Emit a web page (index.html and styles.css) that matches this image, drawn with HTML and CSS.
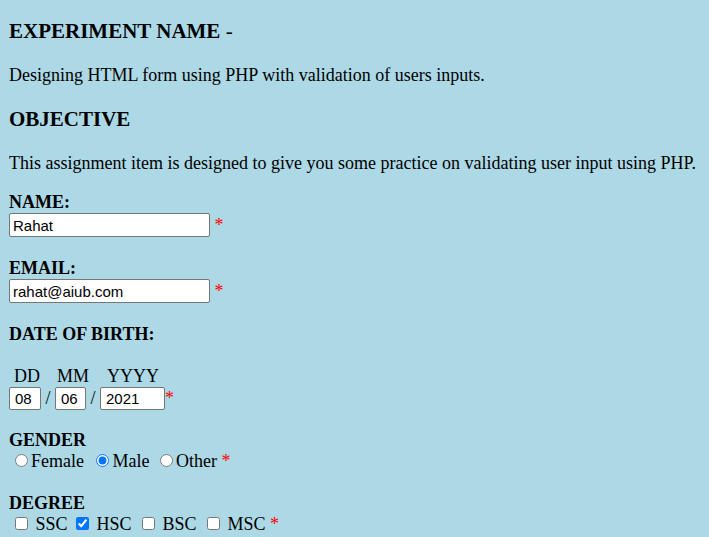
FILE: index.html
```html
<!DOCTYPE html>
<html>
<head>
<meta charset="utf-8">
<link rel="stylesheet" href="styles.css">
</head>
<body class="page">
<h3 class="title first">EXPERIMENT NAME <span class="dash">-</span></h3>
<p class="text">Designing HTML form using PHP with validation of users inputs.</p>
<h3 class="title">OBJECTIVE</h3>
<p class="text">This assignment item is designed to give you some practice on validating user input using PHP.</p>
<form class="form">
  <b class="label">NAME:</b><br>
  <input class="text-input" type="text" value="Rahat"> <span class="req">*</span><br><br>
  <b class="label">EMAIL:</b><br>
  <input class="text-input" type="text" value="rahat@aiub.com"> <span class="req">*</span><br><br>
  <b class="label">DATE OF BIRTH:</b><br><br>
  <span class="dob-labels"><span class="dl dl-dd">DD</span><span class="dl dl-mm">MM</span><span class="dl dl-yy">YYYY</span></span><br>
  <input class="date-input dd" type="text" value="08"> / <input class="date-input mm" type="text" value="06"> / <input class="date-input yy" type="text" value="2021"><span class="req">*</span><br><br>
  <b class="label">GENDER</b><br>
  <input type="radio" name="g" class="radio">Female <input type="radio" name="g" class="radio radio-wide" checked>Male <input type="radio" name="g" class="radio">Other <span class="req">*</span><br><br>
  <b class="label">DEGREE</b><br>
  <input type="checkbox" class="check"> SSC <input type="checkbox" class="check check-tight" checked> HSC <input type="checkbox" class="check"> BSC <input type="checkbox" class="check"> MSC <span class="req">*</span>
</form>
</body>
</html>
```
FILE: styles.css
```css
.page {
  background: #add8e6;
  font-family: "Liberation Serif", "Times New Roman", serif;
  font-size: 18px;
  color: #000;
  margin: 9px;
}
.title {
  font-size: 21px;
  font-weight: bold;
  margin: 21px 0;
}
.first { margin-top: 10px; }
.dash { font-weight: normal; }
.text { margin: 18px 0; }
.form { margin: 0; }
.label { font-weight: bold; }
.text-input {
  font-family: "Liberation Sans", Arial, sans-serif;
  font-size: 15px;
  width: 201px;
  height: 24px;
  box-sizing: border-box;
  padding: 1px 3px;
  margin: 0;
  border: 1px solid #767676;
  border-radius: 2px;
  background: #fff;
  color: #000;
}
.date-input {
  font-family: "Liberation Sans", Arial, sans-serif;
  font-size: 15px;
  height: 23px;
  box-sizing: border-box;
  padding: 1px 4px 1px 5px;
  margin: 0 0 -3px 0;
  border: 1px solid #767676;
  border-radius: 2px;
  background: #fff;
  color: #000;
}
.dd { width: 32px; }
.mm { width: 31px; }
.yy { width: 65px; }
.req { color: red; }
.dob-labels { display: inline-flex; }
.dl { display: inline-block; }
.dl-dd { margin-left: 5px; }
.dl-mm { margin-left: 17px; }
.dl-yy { margin-left: 18px; }
.radio { width: 13px; height: 13px; margin: 3px 3px 0 6px; }
.radio-wide { margin-left: 8px; }
.check { width: 13px; height: 13px; margin: 3px 3px 3px 6px; }
.check-tight { margin-left: 4px; }
```
